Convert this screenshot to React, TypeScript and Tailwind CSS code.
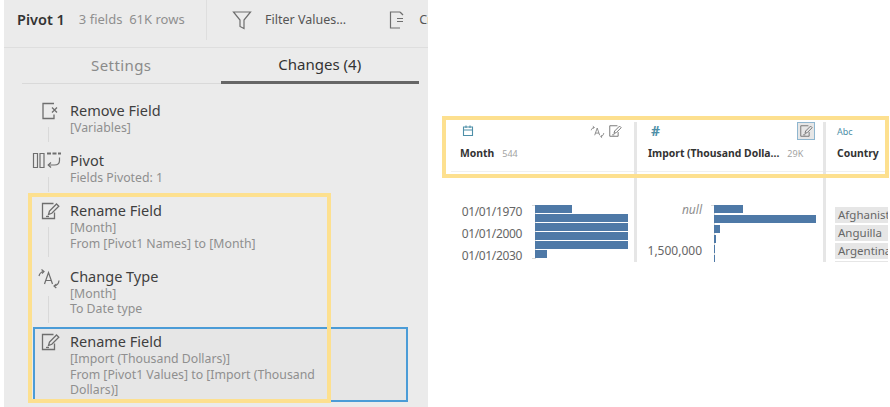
const font = { fontFamily: '"Noto Sans", "Open Sans", sans-serif' }

type Change = {
  icon: 'remove' | 'pivot' | 'rename' | 'type'
  title: string
  lines: string[]
  line?: boolean
  selected?: boolean
}

const changes: Change[] = [
  { icon: 'remove', title: 'Remove Field', lines: ['[Variables]'], line: true },
  { icon: 'pivot', title: 'Pivot', lines: ['Fields Pivoted: 1'], line: true },
  { icon: 'rename', title: 'Rename Field', lines: ['[Month]', 'From [Pivot1 Names] to [Month]'], line: true },
  { icon: 'type', title: 'Change Type', lines: ['[Month]', 'To Date type'], line: true },
  {
    icon: 'rename',
    title: 'Rename Field',
    lines: ['[Import (Thousand Dollars)]', 'From [Pivot1 Values] to [Import (Thousand', 'Dollars)]'],
    selected: true,
  },
]

const RenameIcon = ({ size = 20 }: { size?: number }) => (
  <svg width={size} height={size} viewBox="0 0 20 20" fill="none" stroke="#6e6e6e" strokeWidth="1.3">
    <path d="M13.5 2.5H2.5v15h12v-6" />
    <path d="M8.5 13.5l1-3.5 7-7 2.3 2.3-7 7z" />
    <path d="M6 15.5h3" />
  </svg>
)

const TypeIcon = ({ size = 24 }: { size?: number }) => (
  <svg width={size} height={size} viewBox="0 0 24 24" fill="none" stroke="#6e6e6e" strokeWidth="1.2">
    <path d="M7.5 18L11.5 6.500l4 11.500M8.800 14.500h5.400" />
    <path d="M2 10c.6-2.500 2-4 4.500-4.500" />
    <path d="M4.500 3.500l2.500 2-2 2" />
    <path d="M22 14.500c-.3 3-2 5-4.500 5.500" />
    <path d="M19.500 18l-2.500 2 2.300 2" />
  </svg>
)

const ChangeIcon = ({ icon }: { icon: Change['icon'] }) => {
  if (icon === 'remove')
    return (
      <svg width="20" height="20" viewBox="0 0 20 20" fill="none" stroke="#6e6e6e" strokeWidth="1.3">
        <path d="M14 2.500H3v15h11v-4" />
        <path d="M12 6.500l5 5M17 6.500l-5 5" />
      </svg>
    )
  if (icon === 'pivot')
    return (
      <svg width="30" height="20" viewBox="0 0 30 20" fill="none" stroke="#6e6e6e" strokeWidth="1.200" className="-ml-[8px]">
        <path d="M1.500 2.500h4v14h-4zM8 2.500h4v14H8z" />
        <path d="M15 2.500h4M20.500 2.500h4M26 2.500h3" strokeWidth="2.200" />
        <path d="M27.500 6.500v3c0 3-2 4.500-5 4.500h-6" />
        <path d="M19 11.500l-2.800 2.500 2.800 2.500" />
      </svg>
    )
  if (icon === 'type') return <div className="-ml-[3px] -mt-[1px]"><TypeIcon /></div>
  return <RenameIcon />
}

const ChangeRow = ({ change }: { change: Change }) => (
  <div
    className={`flex border-2 pt-[3px] ${
      change.selected ? 'border-[#4b9cd7] bg-[#e6e6e6] pb-[2.5px]' : 'border-transparent pb-[8.5px]'
    }`}
  >
    <div className="flex w-[35px] shrink-0 flex-col pl-[5px]">
      <ChangeIcon icon={change.icon} />
      {change.line && <div className="mt-[6px] -mb-[6px] ml-[8px] w-px flex-1 bg-[#d9d9d9]" />}
    </div>
    <div>
      <div className="text-[14.5px] leading-[18px] text-[#3f3f3f]">{change.title}</div>
      <div className="mt-[1px]">
        {change.lines.map((line) => (
          <div key={line} className="text-[12.3px] leading-[15.5px] whitespace-nowrap text-[#8f8f8f]">
            {line}
          </div>
        ))}
      </div>
    </div>
  </div>
)

const Panel = () => (
  <div className="ml-[4px] h-[407px] w-[424px] shrink-0 overflow-hidden bg-[#ebebeb]">
    <div className="flex h-[48px] items-start border-b border-[#dedede] whitespace-nowrap">
      <div className="flex h-[40px] w-[203px] shrink-0 items-center gap-[14px] border-r border-[#dedede] pl-[13px]">
        <span className="text-[14.5px] font-semibold text-[#333333]">Pivot 1</span>
        <span className="text-[13px] text-[#8f8f8f]">3 fields&nbsp; 61K rows</span>
      </div>
      <div className="flex h-[40px] items-center">
        <svg width="20" height="20" viewBox="0 0 20 20" fill="none" stroke="#6e6e6e" strokeWidth="1.200" className="ml-[25px]">
          <path d="M1.500 2h17l-6.500 8v8.500L8 16.500V10z" />
        </svg>
        <span className="ml-[13px] text-[12.5px] text-[#555555]">Filter Values...</span>
        <svg width="16" height="20" viewBox="0 0 16 20" fill="none" stroke="#6e6e6e" strokeWidth="1.200" className="ml-[43px]">
          <path d="M11 2H1.500v16H11M8 8.500h6M8 11.500h6" />
          <path d="M11 2l3 3" />
        </svg>
        <span className="ml-[14px] text-[12.5px] text-[#555555]">Cr</span>
      </div>
    </div>
    <div className="ml-[18px] flex h-[36px] w-[397px]">
      <div className="flex flex-1 items-center justify-center border-b border-[#d9d9d9] text-[15px] tracking-[0.4px] text-[#8a8a8a]">
        Settings
      </div>
      <div className="flex flex-1 items-center justify-center border-b-[3px] border-[#666666] text-[15px] text-[#333333]">
        Changes (4)
      </div>
    </div>
    <div className="mt-[12px] flex w-[375px] translate-x-[29px] flex-col">
      {changes.map((change, i) => (
        <ChangeRow key={i} change={change} />
      ))}
    </div>
  </div>
)

const Column = ({
  icon,
  actions,
  title,
  count,
  width,
  pad,
  children,
}: {
  icon: React.ReactNode
  actions?: React.ReactNode
  title: string
  count?: string
  width: string
  pad: string
  children: React.ReactNode
}) => (
  <div className={`flex h-[140px] shrink-0 flex-col overflow-hidden ${width}`}>
    <div className={`h-[50px] shrink-0 border-b border-[#f0f0f0] pr-[12px] ${pad}`}>
      <div className="flex h-[18px] items-center justify-between">
        {icon}
        <div className="flex items-center gap-[3px]">{actions}</div>
      </div>
      <div className="mt-[6px] flex items-baseline gap-[8px] whitespace-nowrap">
        <span className="text-[10.4px] font-bold text-[#333333]">{title}</span>
        {count && <span className="text-[9px] text-[#a3a3a3]">{count}</span>}
      </div>
    </div>
    <div className="relative flex-1">{children}</div>
  </div>
)

const Bars = ({ widths, gaps }: { widths: number[]; gaps: number[] }) => (
  <div className="ml-[-1px] flex flex-col pt-[33px]">
    {widths.map((w, i) => (
      <div
        key={i}
        className="shrink-0 bg-[#4e79a7]"
        style={{ width: w, height: 8, marginBottom: gaps[i] }}
      />
    ))}
  </div>
)

const Profile = () => (
  <div className="mt-[122px] ml-[23px] flex h-[140px] text-[#666666]">
    <Column
      width="w-[186px] border-r-[3px] border-[#e6e6e6]"
      pad="pl-[9px]"
      title="Month"
      count="544"
      icon={
        <svg width="14" height="14" viewBox="0 0 14 14" fill="none" stroke="#4e8fa8" strokeWidth="1.100" className="ml-[1px]">
          <path d="M2.500 3h9v8.500h-9zM2.500 6h9M5 1.500V4M9 1.500V4" />
        </svg>
      }
      actions={
        <>
          <TypeIcon size={15} />
          <RenameIcon size={14} />
        </>
      }
    >
      <div className="flex">
        <div className="w-[71px] shrink-0 pt-[29px] text-right text-[12px] leading-[22px] tracking-[-0.35px]">
          <div>01/01/1970</div>
          <div>01/01/2000</div>
          <div>01/01/2030</div>
        </div>
        <div className="mt-[33px] ml-[10px] h-[54px] w-[4px] border-y border-r border-[#d9d9d9]" />
        <Bars widths={[37, 93, 93, 93, 93, 12]} gaps={[1, 1, 1, 1, 1, 0]} />
      </div>
    </Column>
    <Column
      width="w-[189px] border-r-[3px] border-[#e6e6e6]"
      pad="pl-[11px]"
      title="Import (Thousand Dolla..."
      count="29K"
      icon={<span className="ml-[3px] text-[14px] leading-none font-bold text-[#4e8fa8]">#</span>}
      actions={
        <div className="-mt-[1px] -mr-[4px] flex h-[18px] w-[18px] items-center justify-center border border-[#8fb6cf] bg-[#e6e6e6]">
          <RenameIcon size={14} />
        </div>
      }
    >
      <div className="flex">
        <div className="w-[65px] shrink-0 pt-[30px] text-right">
          <div className="text-[12px] leading-[16px] text-[#8f8f8f] italic">null</div>
          <div className="mt-[25px] text-[12px] leading-[16px]">1,500,000</div>
        </div>
        <div className="mt-[33px] ml-[9px] h-[60px] w-[4px] border-t border-r border-[#d9d9d9]" />
        <Bars widths={[29, 102, 6, 2, 1, 1]} gaps={[2, 2, 2, 2, 2, 0]} />
      </div>
    </Column>
    <Column
      width="w-[62px]"
      pad="pl-[11px]"
      title="Country"
      icon={<span className="text-[9px] leading-none text-[#4e8fa8]">Abc</span>}
    >
      <div className="ml-[9px] flex flex-col gap-[2px] pt-[35px] whitespace-nowrap">
        {['Afghanistan', 'Anguilla', 'Argentina', 'Aruba'].map((name) => (
          <div key={name} className="h-[16px] bg-[#e6e6e6] pl-[3px] text-[11.5px] leading-[16px]">
            {name}
          </div>
        ))}
      </div>
    </Column>
  </div>
)

export default function App() {
  return (
    <div className="relative flex h-[407px] w-[890px] overflow-hidden bg-white" style={font}>
      <Panel />
      <Profile />
      {/* yellow callouts drawn over the panels */}
      <div className="pointer-events-none absolute top-[193px] left-[28px] h-[210px] w-[303px] border-4 border-[#fde08f]" />
      <div className="pointer-events-none absolute top-[116px] left-[442px] h-[62px] w-[447px] border-4 border-[#fde08f]" />
    </div>
  )
}
